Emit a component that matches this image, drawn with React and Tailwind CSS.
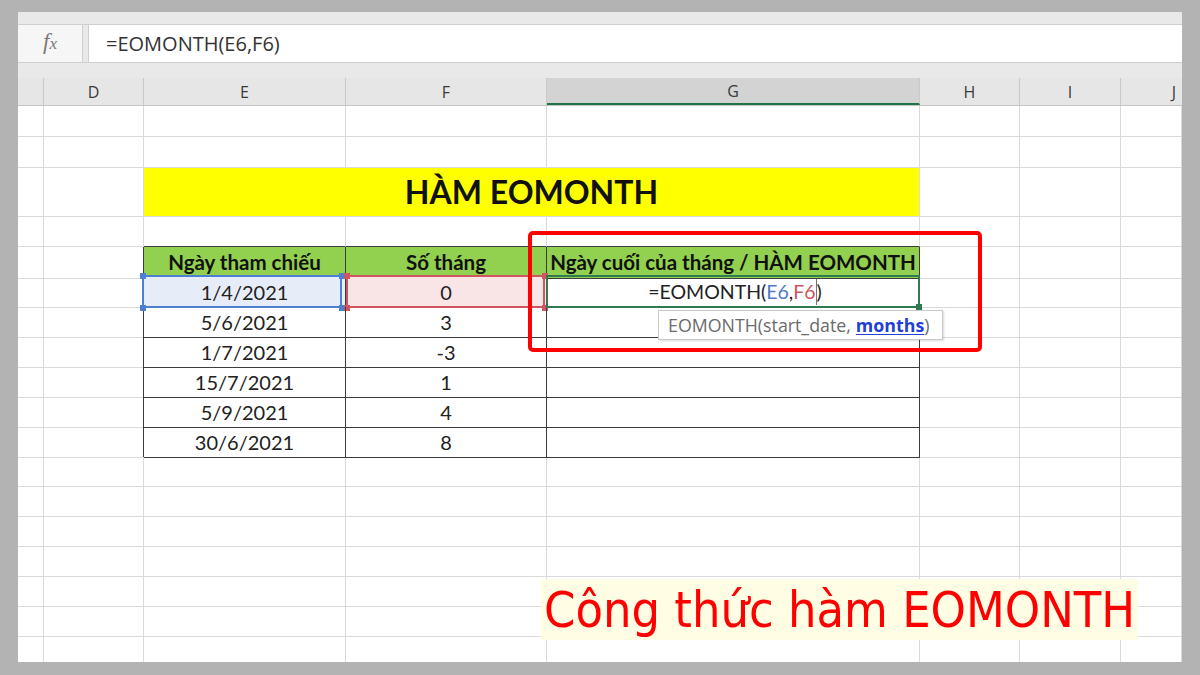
import clsx from 'clsx'

const COLS = 'grid shrink-0 grid-cols-[26px_100px_202px_201px_373px_100px_101px_61px]'
const GRID = 'border-r border-b border-[#dadada]'
const DARK = 'border-r border-b border-[#3c3c3c]'
const CELL_FONT = { fontFamily: 'Lato, "Open Sans", sans-serif' }

const rows = [
  ['1/4/2021', '0'],
  ['5/6/2021', '3'],
  ['1/7/2021', '-3'],
  ['15/7/2021', '1'],
  ['5/9/2021', '4'],
  ['30/6/2021', '8'],
]

function Handle({ className }) {
  return <span className={clsx('absolute w-[6px] h-[6px]', className)} />
}

function EmptyRow({ h }) {
  return (
    <div className={clsx(COLS, h)}>
      {Array.from({ length: 8 }).map((_, i) => (
        <div key={i} className={GRID} />
      ))}
    </div>
  )
}

function TableRow({ date, months, first }) {
  return (
    <div className={clsx(COLS, 'h-[30px] text-[20px] text-[#222]')} style={CELL_FONT}>
      <div className={GRID} />
      <div className="border-r border-b border-b-[#dadada] border-r-[#3c3c3c]" />
      <div className={clsx(DARK, 'relative flex items-center justify-center', first && 'bg-[#e7edf8]')}>
        {first && (
          <>
            <span className="absolute -left-[2px] -top-[2px] right-[3px] -bottom-px border-2 border-[#4d7fd3]" />
            <Handle className="-left-[4px] -top-[4px] bg-[#4d7fd3]" />
            <Handle className="right-[0px] -top-[4px] bg-[#4d7fd3]" />
            <Handle className="-left-[4px] -bottom-[4px] bg-[#4d7fd3]" />
            <Handle className="right-[0px] -bottom-[4px] bg-[#4d7fd3]" />
          </>
        )}
        <span className="relative">{date}</span>
      </div>
      <div className={clsx(DARK, 'relative flex items-center justify-center', first && 'bg-[#f9e5e6]')}>
        {first && (
          <>
            <span className="absolute left-0 -top-[2px] right-[1px] -bottom-px border-2 border-[#cf5660]" />
            <Handle className="-left-[2px] -top-[4px] bg-[#cf5660]" />
            <Handle className="-right-[2px] -top-[4px] bg-[#cf5660]" />
            <Handle className="-left-[2px] -bottom-[4px] bg-[#cf5660]" />
            <Handle className="-right-[2px] -bottom-[4px] bg-[#cf5660]" />
          </>
        )}
        <span className="relative">{months}</span>
      </div>
      <div className={clsx(DARK, 'relative flex items-center justify-center', first && 'z-10')}>
        {first && (
          <>
            <span className="absolute -left-px -top-[2px] -right-px -bottom-px border-2 border-[#2f7a4e]" />
            <Handle className="-right-[3px] -bottom-[3px] w-[5px] h-[5px] bg-[#2f7a4e]" />
            <span className="relative flex items-center text-[19.5px] pl-[4px]">
              =EOMONTH(<span className="text-[#4f79c9]">E6</span>,<span className="text-[#d0555c]">F6</span>
              <span className="inline-block w-px h-[26px] bg-[#777]" />)
            </span>
            <div
              className="absolute left-[111px] top-[33px] w-[285px] h-[30px] bg-white border border-[#c9c9c9] shadow-[1px_1px_2px_rgba(0,0,0,0.15)] flex items-center pl-[9px] text-[17.8px] text-[#6b6b6b] whitespace-nowrap"
              style={{ fontFamily: '"Open Sans", sans-serif' }}
            >
              EOMONTH(start_date, <span className="font-bold text-[#1f3fd6] underline underline-offset-2 ml-[5px]">months</span>)
            </div>
          </>
        )}
      </div>
      <div className={GRID} />
      <div className={GRID} />
      <div className={GRID} />
    </div>
  )
}

export default function App() {
  const headers = ['', 'D', 'E', 'F', 'G', 'H', 'I', 'J']

  return (
    <div className="w-[1200px] h-[675px] bg-[#b3b3b3] pt-[12px] pl-[18px] pr-[18px] pb-[13px]">
      <div className="relative w-full h-full bg-white flex flex-col overflow-hidden">
        {/* ribbon edge */}
        <div className="h-[13px] shrink-0 bg-[#e9e9e9] border-b border-[#cfcfcf]" />

        {/* formula bar */}
        <div className="h-[37px] shrink-0 flex bg-[#e9e9e9]">
          <div className="w-[65px] bg-[#f6f6f6] border-r border-[#cfcfcf] flex items-center justify-center">
            <span className="italic text-[#7a7a7a] text-[23px] -mt-[2px]" style={{ fontFamily: '"Liberation Serif", serif' }}>
              f<span className="text-[17px]">x</span>
            </span>
          </div>
          <div className="w-[6px] border-r border-[#cfcfcf]" />
          <div className="flex-1 bg-white flex items-center pl-[17px] text-[20px] text-[#333]" style={{ fontFamily: '"Open Sans", sans-serif' }}>
            =EOMONTH(E6,F6)
          </div>
        </div>
        <div className="h-[16px] shrink-0 bg-[#e9e9e9] border-t border-[#cfcfcf]" />

        {/* column headers */}
        <div className={clsx(COLS, 'h-[28px] bg-[#e6e6e6] border-b border-[#c4c4c4] text-[16px] text-[#3a3a3a]')} style={{ fontFamily: '"Open Sans", sans-serif' }}>
          {headers.map((h, i) => (
            <div
              key={i}
              className={clsx(
                'flex items-center justify-center border-r border-[#c9c9c9]',
                h === 'G' && 'bg-[#d3d3d3] border-b-2 border-b-[#217346]',
                h === 'J' && 'justify-end pr-[6px] border-r-0'
              )}
            >
              {h}
            </div>
          ))}
        </div>

        {/* sheet */}
        <EmptyRow h="h-[31px]" />
        <EmptyRow h="h-[31px]" />
        <div className={clsx(COLS, 'h-[49px]')} style={CELL_FONT}>
          <div className={GRID} />
          <div className={GRID} />
          <div className={clsx(GRID, 'col-span-3 bg-[#ffff00] flex items-center justify-center text-[32px] font-bold text-[#111]')}>
            HÀM EOMONTH
          </div>
          <div className={GRID} />
          <div className={GRID} />
          <div className={GRID} />
        </div>
        <div className={clsx(COLS, 'h-[30px]')}>
          <div className={GRID} />
          <div className={GRID} />
          <div className="border-r border-b border-r-[#dadada] border-b-[#3c3c3c]" />
          <div className="border-r border-b border-r-[#dadada] border-b-[#3c3c3c]" />
          <div className="border-r border-b border-r-[#dadada] border-b-[#3c3c3c]" />
          <div className={GRID} />
          <div className={GRID} />
          <div className={GRID} />
        </div>
        <div className={clsx(COLS, 'h-[30px] text-[20.5px] font-bold text-[#111]')} style={CELL_FONT}>
          <div className={GRID} />
          <div className="border-r border-b border-b-[#dadada] border-r-[#3c3c3c]" />
          <div className={clsx(DARK, 'bg-[#92d050] flex items-center justify-center')}>Ngày tham chiếu</div>
          <div className={clsx(DARK, 'bg-[#92d050] flex items-center justify-center')}>Số tháng</div>
          <div className={clsx(DARK, 'bg-[#92d050] flex items-center justify-center whitespace-nowrap')}>
            Ngày cuối của tháng / HÀM EOMONTH
          </div>
          <div className={GRID} />
          <div className={GRID} />
          <div className={GRID} />
        </div>
        {rows.map(([d, m], i) => (
          <TableRow key={i} date={d} months={m} first={i === 0} />
        ))}
        {Array.from({ length: 7 }).map((_, i) => (
          <EmptyRow key={i} h="h-[30px]" />
        ))}

        {/* annotation frame */}
        <div className="absolute left-[510px] top-[219px] w-[454px] h-[121px] border-4 border-[#ff0000] rounded-[5px] z-20 pointer-events-none" />

        {/* caption text box */}
        <div
          className="absolute left-[523px] top-[567px] w-[597px] h-[61px] bg-[#fffde3] flex items-center pl-[3px] text-[50px] leading-none text-[#ff0000] whitespace-nowrap z-20"
          style={{ fontFamily: '"DejaVu Sans Condensed", "DejaVu Sans", sans-serif', fontStretch: 'condensed' }}
        >
          Công thức hàm EOMONTH
        </div>
      </div>
    </div>
  )
}
